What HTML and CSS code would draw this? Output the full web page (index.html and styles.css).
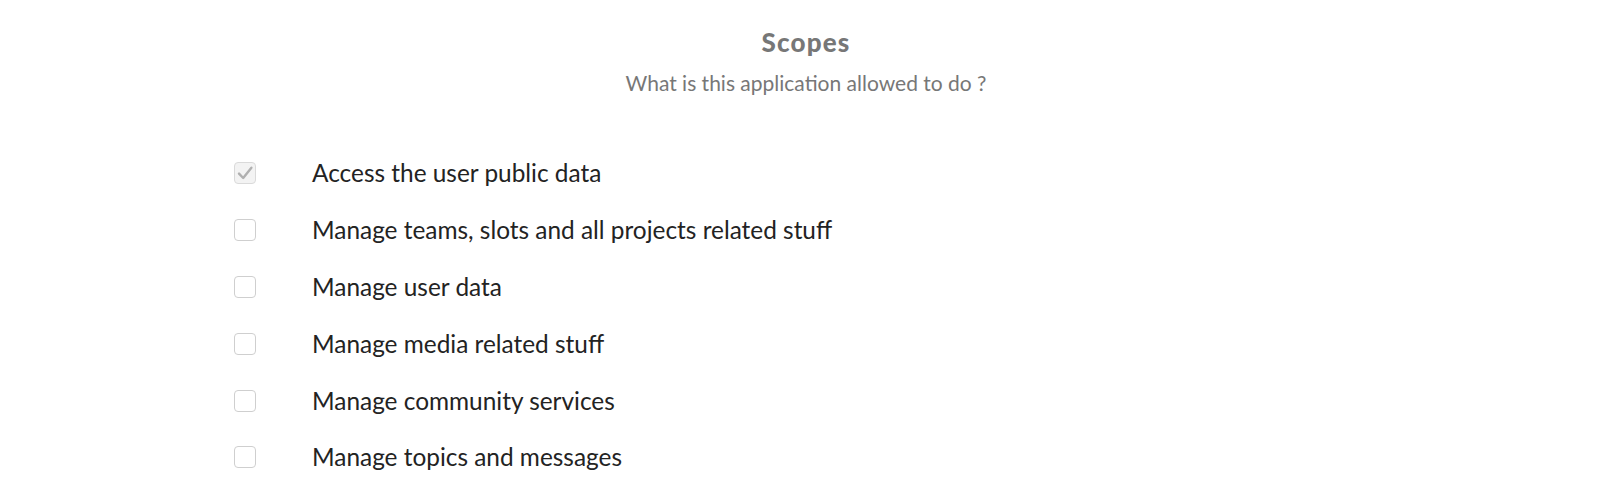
FILE: index.html
```html
<!DOCTYPE html>
<html lang="en">
<head>
<meta charset="utf-8">
<title>Scopes</title>
<link rel="stylesheet" href="styles.css">
</head>
<body>
<main class="scopes">
  <header class="scopes-header">
    <h2 class="scopes-title">Scopes</h2>
    <p class="scopes-subtitle">What is this application allowed to do ?</p>
  </header>
  <ul class="scope-list">
    <li class="scope-row">
      <span class="box box-checked">
        <svg viewBox="0 0 22 22" width="22" height="22"><path d="M5 11.6 L9.2 16 L17.4 5.8" fill="none" stroke="#b0b0b0" stroke-width="2.4" stroke-linecap="round" stroke-linejoin="round"/></svg>
      </span>
      <span class="scope-label">Access the user public data</span>
    </li>
    <li class="scope-row"><span class="box"></span><span class="scope-label">Manage teams, slots and all projects related stuff</span></li>
    <li class="scope-row"><span class="box"></span><span class="scope-label">Manage user data</span></li>
    <li class="scope-row"><span class="box"></span><span class="scope-label">Manage media related stuff</span></li>
    <li class="scope-row"><span class="box"></span><span class="scope-label">Manage community services</span></li>
    <li class="scope-row"><span class="box"></span><span class="scope-label">Manage topics and messages</span></li>
  </ul>
</main>
</body>
</html>
```
FILE: styles.css
```css
html, body {
  margin: 0;
  padding: 0;
  background: #ffffff;
}
body {
  font-family: "Lato", "Noto Sans", sans-serif;
  color: #232323;
}
.scopes {
  padding-top: 27px;
}
.scopes-header {
  display: flex;
  flex-direction: column;
  align-items: center;
  gap: 13px;
  padding-right: 8px;
}
.scopes-title {
  margin: 0;
  font-size: 26px;
  line-height: 30px;
  font-weight: 900;
  letter-spacing: 1.2px;
  color: #777777;
}
.scopes-subtitle {
  margin: 0;
  font-size: 21px;
  line-height: 26px;
  font-weight: 400;
  color: #777777;
}
.scope-list {
  list-style: none;
  margin: 49px 0 0 0;
  padding: 0 0 0 234px;
  display: flex;
  flex-direction: column;
}
.scope-row {
  height: 56.8px;
  display: flex;
  align-items: center;
  gap: 56px;
}
.box {
  width: 22px;
  height: 22px;
  box-sizing: border-box;
  border: 1px solid #cfcfcf;
  border-radius: 4px;
  background: #ffffff;
  flex: none;
  display: flex;
}
.box-checked {
  background: #f3f3f3;
  border-color: #dadada;
}
.box svg {
  display: block;
  margin: -1px;
}
.scope-label {
  font-size: 24.4px;
  line-height: 28px;
  color: #232323;
}
```
